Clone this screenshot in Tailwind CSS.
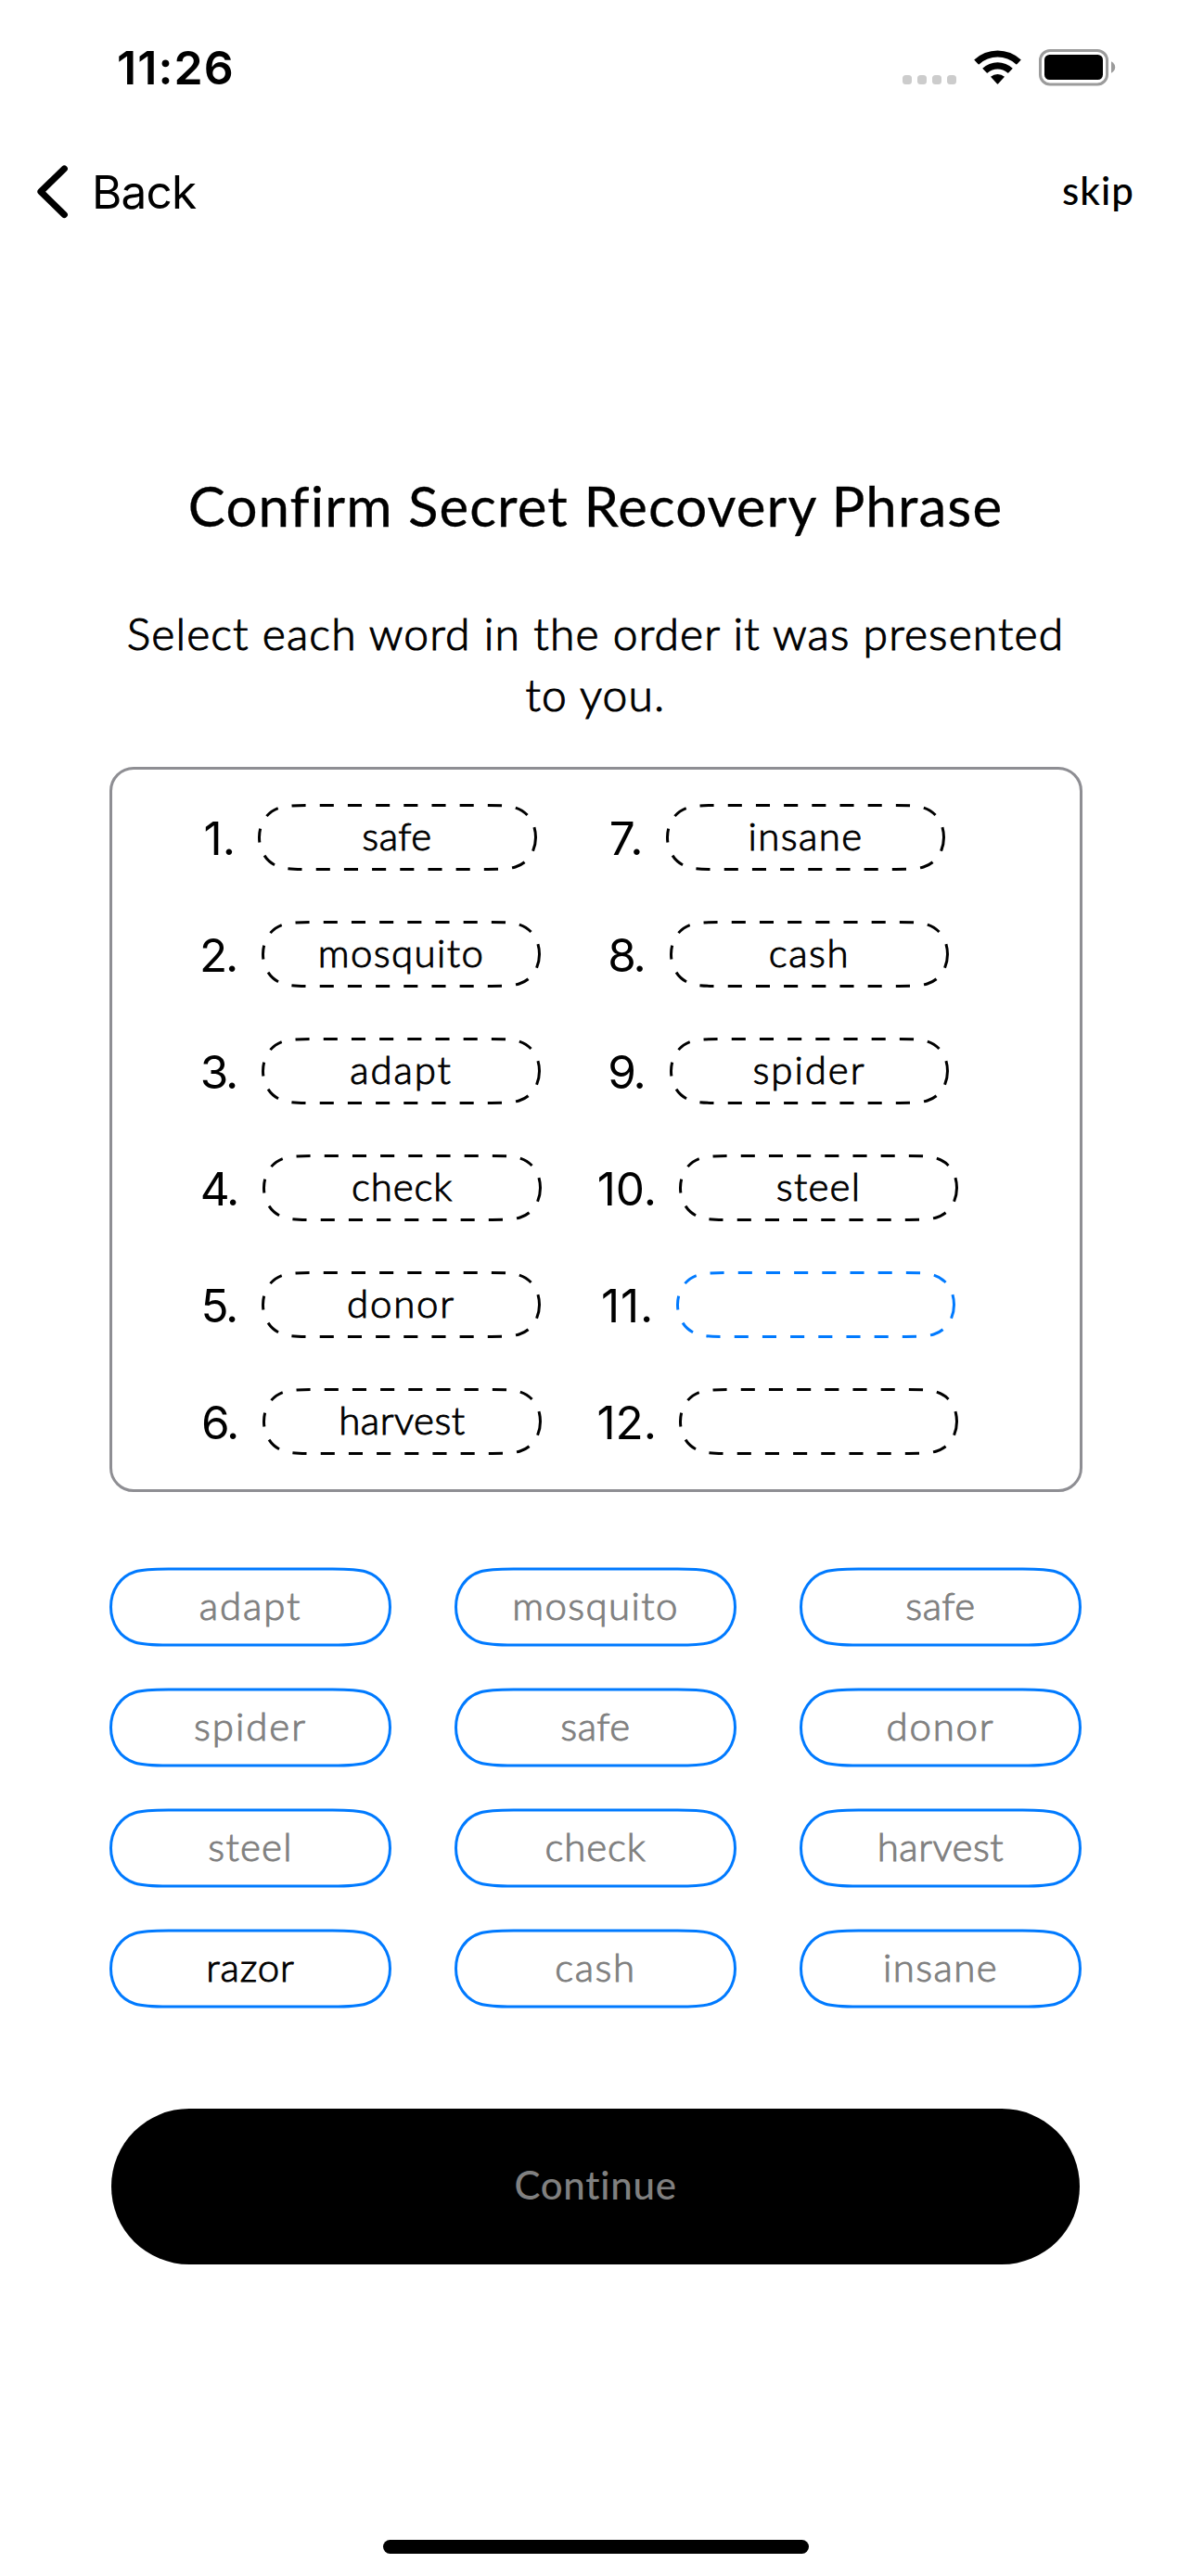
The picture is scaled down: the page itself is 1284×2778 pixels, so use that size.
<!DOCTYPE html>
<html lang="en">
<head>
<meta charset="utf-8">
<title>Confirm Secret Recovery Phrase</title>
<script src="https://cdn.jsdelivr.net/npm/@tailwindcss/browser@4"></script>
</head>
<body class="bg-white">
<svg class="hidden">
  <symbol id="slot" viewBox="0 0 301 72">
    <path pathLength="671" d="M299.5 36C299.5 51.2 291.1 63.8 277.6 68C270.9 70.1 260.8 70.5 247.5 70.5H53.5C40.2 70.5 30.1 70.1 23.4 68C9.9 63.8 1.5 51.2 1.5 36C1.5 20.8 9.9 8.2 23.4 4C30.1 1.9 40.2 1.5 53.5 1.5H247.5C260.8 1.5 270.9 1.9 277.6 4C291.1 8.2 299.5 20.8 299.5 36" fill="none" stroke="currentColor" stroke-width="3" stroke-dasharray="15 15"/>
  </symbol>
  <symbol id="chip" viewBox="0 0 304 86">
    <path d="M1.5 43C1.5 25 11.5 10 27.5 5C35.5 2.5 47.5 2 63.5 2H240.5C256.5 2 268.5 2.5 276.5 5C292.5 10 302.5 25 302.5 43C302.5 61 292.5 76 276.5 81C268.5 83.5 256.5 84 240.5 84H63.5C47.5 84 35.5 83.5 27.5 81C11.5 76 1.5 61 1.5 43Z" fill="none" stroke="#007aff" stroke-width="3"/>
  </symbol>
</svg>
<main class="flex h-[2778px] w-[1284px] flex-col overflow-hidden font-['Lato',sans-serif] text-black">
  <!-- Status bar -->
  <header class="flex h-[146px] items-center justify-between pr-[81px] pl-[126px]">
    <span class="font-['Inter',sans-serif] text-[50px] leading-none font-semibold tracking-[1.1px]">11:26</span>
    <div class="flex">
      <svg class="h-[40px] w-[232px]" viewBox="971 53 232 40">
        <g fill="#cccccc">
          <rect x="973" y="81" width="10" height="10" rx="3.5"/>
          <rect x="989" y="81" width="10" height="10" rx="3.5"/>
          <rect x="1005" y="81" width="10" height="10" rx="3.5"/>
          <rect x="1021" y="81" width="10" height="10" rx="3.5"/>
        </g>
        <path d="M1050.2 64.6A36.5 36.5 0 0 1 1100.8 64.6L1096.6 69.1Q1096 69.8 1095.3 69.2A29.5 29.5 0 0 0 1055.700 69.2Q1055 69.8 1054.400 69.100Z"/>
        <path d="M1059.200 73.700A24 24 0 0 1 1091.800 73.700L1087.500 78.300Q1086.900 79 1086.200 78.400A16.500 16.500 0 0 0 1064.800 78.400Q1064.100 79 1063.500 78.300Z"/>
        <path d="M1068 82.800A11.500 11.500 0 0 1 1083 82.800L1076.200 90.300Q1075.500 91 1074.800 90.300Z"/>
        <rect x="1121.500" y="54.500" width="72" height="36.500" rx="10.500" fill="none" stroke="#9b9b9b" stroke-width="3"/>
        <rect x="1126" y="59" width="63" height="27" rx="5.500"/>
        <path d="M1198 66.300Q1202.200 68.500 1202.200 72.500T1198 78.700Z" fill="#9b9b9b"/>
      </svg>
    </div>
  </header>
  <!-- Navigation -->
  <nav class="flex h-[122px] items-center justify-between pr-[61px] pl-[40px]">
    <div class="flex items-center">
      <svg class="h-[58px] w-[34px]" viewBox="0 0 34 58"><path d="M29.300 4L4 28.700L29.300 53.500" fill="none" stroke="black" stroke-width="7.200" stroke-linecap="round" stroke-linejoin="round"/></svg>
      <span class="pt-[1px] pl-[25px] font-['Inter',sans-serif] text-[49.5px] leading-none tracking-[-0.8px]">Back</span>
    </div>
    <span class="pb-[4px] text-[42px] leading-none font-medium tracking-[1.1px]">skip</span>
  </nav>
  <h1 class="mt-[241px] text-center text-[60px] leading-[72px] font-normal tracking-[1.1px] [-webkit-text-stroke:0.3px_black]">Confirm Secret Recovery Phrase</h1>
  <p class="mt-[69px] text-center text-[48px] leading-[66px] font-light tracking-[1.13px] [-webkit-text-stroke:1.1px_black]">Select each word in the order it was presented<br>to you.</p>

  <!-- Ordered slots -->
  <section class="mt-[45px] ml-[118px] grid h-[782px] w-[1049px] grid-flow-col grid-cols-[500px_1fr] grid-rows-[repeat(6,126px)] rounded-[26px] border-3 border-[#8e8e93] pt-[10px]">
    <div class="flex items-center">
      <span class="w-[156.5px] pt-[4px] pr-[23.5px] text-right font-['Inter',sans-serif] text-[49.5px] leading-none">1.</span>
      <div class="relative flex h-[72px] w-[301px] items-center justify-center pb-[4px]"><svg class="absolute inset-0 size-full"><use href="#slot"/></svg><span class="text-[42px] leading-none font-light tracking-[0.5px] [-webkit-text-stroke:1px_black]">safe</span></div>
    </div>
    <div class="flex items-center">
      <span class="w-[161px] pt-[4px] pr-[27px] text-right font-['Inter',sans-serif] text-[49.5px] leading-none tracking-[-2.2px]">2.</span>
      <div class="relative flex h-[72px] w-[301px] items-center justify-center pb-[4px]"><svg class="absolute inset-0 size-full"><use href="#slot"/></svg><span class="text-[42px] leading-none font-light tracking-[1.4px] [-webkit-text-stroke:1px_black]">mosquito</span></div>
    </div>
    <div class="flex items-center">
      <span class="w-[161px] pt-[4px] pr-[27px] text-right font-['Inter',sans-serif] text-[49.5px] leading-none tracking-[-2.2px]">3.</span>
      <div class="relative flex h-[72px] w-[301px] items-center justify-center pb-[4px]"><svg class="absolute inset-0 size-full"><use href="#slot"/></svg><span class="text-[42px] leading-none font-light tracking-[1.9px] [-webkit-text-stroke:1px_black]">adapt</span></div>
    </div>
    <div class="flex items-center">
      <span class="w-[162px] pt-[4px] pr-[27px] text-right font-['Inter',sans-serif] text-[49.5px] leading-none tracking-[-2.2px]">4.</span>
      <div class="relative flex h-[72px] w-[301px] items-center justify-center pb-[4px]"><svg class="absolute inset-0 size-full"><use href="#slot"/></svg><span class="text-[42px] leading-none font-light tracking-[0.9px] [-webkit-text-stroke:1px_black]">check</span></div>
    </div>
    <div class="flex items-center">
      <span class="w-[161px] pt-[4px] pr-[27px] text-right font-['Inter',sans-serif] text-[49.5px] leading-none tracking-[-2.2px]">5.</span>
      <div class="relative flex h-[72px] w-[301px] items-center justify-center pb-[4px]"><svg class="absolute inset-0 size-full"><use href="#slot"/></svg><span class="text-[42px] leading-none font-light tracking-[1.8px] [-webkit-text-stroke:1px_black]">donor</span></div>
    </div>
    <div class="flex items-center">
      <span class="w-[162px] pt-[4px] pr-[27px] text-right font-['Inter',sans-serif] text-[49.5px] leading-none tracking-[-2.2px]">6.</span>
      <div class="relative flex h-[72px] w-[301px] items-center justify-center pb-[4px]"><svg class="absolute inset-0 size-full"><use href="#slot"/></svg><span class="text-[42px] leading-none font-light tracking-[0.5px] [-webkit-text-stroke:1px_black]">harvest</span></div>
    </div>
    <div class="flex items-center">
      <span class="w-[97px] pt-[4px] pr-[24px] text-right font-['Inter',sans-serif] text-[49.5px] leading-none tracking-[0.6px]">7.</span>
      <div class="relative flex h-[72px] w-[301px] items-center justify-center pb-[4px]"><svg class="absolute inset-0 size-full"><use href="#slot"/></svg><span class="text-[42px] leading-none font-light tracking-[1.4px] [-webkit-text-stroke:1px_black]">insane</span></div>
    </div>
    <div class="flex items-center">
      <span class="w-[101px] pt-[4px] pr-[27.5px] text-right font-['Inter',sans-serif] text-[49.5px] leading-none tracking-[-2.2px]">8.</span>
      <div class="relative flex h-[72px] w-[301px] items-center justify-center pb-[4px]"><svg class="absolute inset-0 size-full"><use href="#slot"/></svg><span class="text-[42px] leading-none font-light tracking-[1.6px] [-webkit-text-stroke:1px_black]">cash</span></div>
    </div>
    <div class="flex items-center">
      <span class="w-[101px] pt-[4px] pr-[27.5px] text-right font-['Inter',sans-serif] text-[49.5px] leading-none tracking-[-2.2px]">9.</span>
      <div class="relative flex h-[72px] w-[301px] items-center justify-center pb-[4px]"><svg class="absolute inset-0 size-full"><use href="#slot"/></svg><span class="text-[42px] leading-none font-light tracking-[2px] [-webkit-text-stroke:1px_black]">spider</span></div>
    </div>
    <div class="flex items-center">
      <span class="w-[111px] pt-[4px] pr-[24px] text-right font-['Inter',sans-serif] text-[49.5px] leading-none">10.</span>
      <div class="relative flex h-[72px] w-[301px] items-center justify-center pb-[4px]"><svg class="absolute inset-0 size-full"><use href="#slot"/></svg><span class="text-[42px] leading-none font-light tracking-[1.2px] [-webkit-text-stroke:1px_black]">steel</span></div>
    </div>
    <div class="flex items-center">
      <span class="w-[108px] pt-[4px] pr-[24px] text-right font-['Inter',sans-serif] text-[49.5px] leading-none tracking-[0.8px]">11.</span>
      <div class="relative h-[72px] w-[301px] text-[#007aff]"><svg class="absolute inset-0 size-full"><use href="#slot"/></svg></div>
    </div>
    <div class="flex items-center">
      <span class="w-[111px] pt-[4px] pr-[24px] text-right font-['Inter',sans-serif] text-[49.5px] leading-none">12.</span>
      <div class="relative h-[72px] w-[301px]"><svg class="absolute inset-0 size-full"><use href="#slot"/></svg></div>
    </div>
  </section>

  <!-- Word bank -->
  <section class="mt-[81px] ml-[118px] grid grid-cols-[repeat(3,304px)] gap-x-[68px] gap-y-[44px] text-[42px] leading-none font-light text-[#808080] [-webkit-text-stroke:1px_currentColor]">
    <button class="relative flex h-[86px] items-center justify-center pb-[4px] tracking-[1.9px]"><svg class="absolute inset-0 size-full"><use href="#chip"/></svg><span>adapt</span></button>
    <button class="relative flex h-[86px] items-center justify-center pb-[4px] tracking-[1.4px]"><svg class="absolute inset-0 size-full"><use href="#chip"/></svg><span>mosquito</span></button>
    <button class="relative flex h-[86px] items-center justify-center pb-[4px] tracking-[0.5px]"><svg class="absolute inset-0 size-full"><use href="#chip"/></svg><span>safe</span></button>
    <button class="relative flex h-[86px] items-center justify-center pb-[4px] tracking-[2px]"><svg class="absolute inset-0 size-full"><use href="#chip"/></svg><span>spider</span></button>
    <button class="relative flex h-[86px] items-center justify-center pb-[4px] tracking-[0.5px]"><svg class="absolute inset-0 size-full"><use href="#chip"/></svg><span>safe</span></button>
    <button class="relative flex h-[86px] items-center justify-center pb-[4px] tracking-[1.8px]"><svg class="absolute inset-0 size-full"><use href="#chip"/></svg><span>donor</span></button>
    <button class="relative flex h-[86px] items-center justify-center pb-[4px] tracking-[1.2px]"><svg class="absolute inset-0 size-full"><use href="#chip"/></svg><span>steel</span></button>
    <button class="relative flex h-[86px] items-center justify-center pb-[4px] tracking-[0.9px]"><svg class="absolute inset-0 size-full"><use href="#chip"/></svg><span>check</span></button>
    <button class="relative flex h-[86px] items-center justify-center pb-[4px] tracking-[0.5px]"><svg class="absolute inset-0 size-full"><use href="#chip"/></svg><span>harvest</span></button>
    <button class="relative flex h-[86px] items-center justify-center pb-[4px] tracking-[0.9px]"><svg class="absolute inset-0 size-full"><use href="#chip"/></svg><span class="text-black [-webkit-text-stroke:1px_black]">razor</span></button>
    <button class="relative flex h-[86px] items-center justify-center pb-[4px] tracking-[1.6px]"><svg class="absolute inset-0 size-full"><use href="#chip"/></svg><span>cash</span></button>
    <button class="relative flex h-[86px] items-center justify-center pb-[4px] tracking-[1.4px]"><svg class="absolute inset-0 size-full"><use href="#chip"/></svg><span>insane</span></button>
  </section>

  <button class="mt-[108px] ml-[120px] flex h-[168px] w-[1044px] shrink-0 items-center justify-center rounded-full bg-black pb-[4px] text-[42px] leading-none font-medium tracking-[0.74px] text-[#808080]">Continue</button>
  <div class="mt-[297px] ml-[413px] h-[15px] w-[459px] shrink-0 rounded-full bg-black"></div>
</main>
</body>
</html>
